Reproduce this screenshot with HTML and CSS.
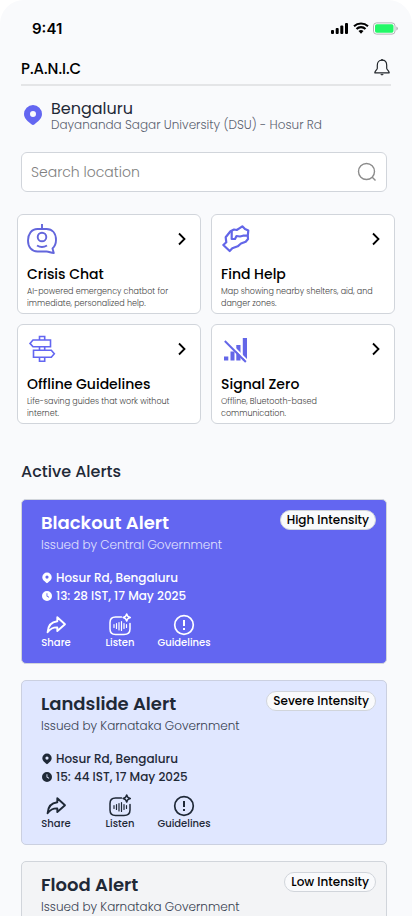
FILE: index.html
```html
<!DOCTYPE html>
<html lang="en">
<head>
<meta charset="utf-8">
<meta name="viewport" content="width=device-width, initial-scale=1">
<title>P.A.N.I.C</title>
<link rel="stylesheet" href="styles.css">
</head>
<body>
<svg class="sprite" aria-hidden="true">
  <symbol id="chevron" viewBox="0 0 8 14"><path d="M1 1.5 6.5 7 1 12.5" fill="none" stroke="currentColor" stroke-width="1.8"/></symbol>
  <symbol id="place" viewBox="0 0 10 12"><path fill="currentColor" fill-rule="evenodd" d="M5 .5A4.700 4.700 0 0 0 .3 5.2C.3 8 3 9.500 5 11.300 7 9.500 9.700 8 9.700 5.200A4.700 4.700 0 0 0 5 .5ZM5 3.500a1.600 1.600 0 1 1 0 3.200 1.600 1.600 0 0 1 0-3.200Z"/></symbol>
  <symbol id="clock" viewBox="0 0 10 10"><path fill="currentColor" fill-rule="evenodd" d="M5 0a5 5 0 1 1 0 10A5 5 0 0 1 5 0ZM4.500 2.300v3l2.300 1.500.5-.8-1.900-1.200V2.300Z"/></symbol>
  <symbol id="share" viewBox="0 0 24 24"><path d="M13.300 4.300 21 11.200 13.300 18v-3.600C9.500 14.200 6.500 15.500 3.600 19.200 4 13 7.500 8.800 13.300 8.200Z" fill="none" stroke="currentColor" stroke-width="1.900" stroke-linejoin="round"/></symbol>
  <symbol id="listen" viewBox="0 0 24 24"><g fill="none" stroke="currentColor" stroke-linecap="round" stroke-linejoin="round"><path stroke-width="1.500" d="M13.500 4H7.500Q2 4 2 9.500v6.500q0 5.500 5.500 5.500h8.500q6 0 6-5.500v-5.500"/><path stroke-width="1.200" d="M6 11.500v3M8.500 10.500v5M11 9.500v7.500M13.500 8.500v9M16 10.500v5M18.500 11.500v3"/><path stroke-width="1.500" d="M18.700.9q.4 3 3.600 3.600-3.200.6-3.600 3.600-.5-3-3.600-3.600 3.100-.6 3.600-3.600Z"/></g></symbol>
  <symbol id="guide" viewBox="0 0 24 24"><circle cx="12" cy="12" r="9.300" fill="none" stroke="currentColor" stroke-width="1.700"/><path d="M12 7v6M12 15v2" stroke="currentColor" stroke-width="2"/></symbol>
</svg>
<div class="screen">
  <div class="status">
    <span class="time">9:41</span>
    <span class="status-icons">
      <svg width="18" height="12" viewBox="0 0 18 12"><rect x="0" y="8" width="3" height="4" rx="1"/><rect x="4.700" y="6" width="3" height="6" rx="1"/><rect x="9.300" y="3.500" width="3" height="8.500" rx="1"/><rect x="14" y="1" width="3" height="11" rx="1"/></svg>
      <svg width="16" height="12" viewBox="0 0 16 12"><g fill="none" stroke="#000" stroke-width="2.100"><path d="M1 4.300a10.200 10.200 0 0 1 14 0"/><path d="M3.500 7a6.400 6.400 0 0 1 9 0"/></g><path d="M8 11.700 5.500 9.100a3.600 3.600 0 0 1 5 0Z"/></svg>
      <svg width="26" height="13" viewBox="0 0 26 13"><rect x=".5" y=".9" width="21.500" height="11.200" rx="3" fill="#fff" stroke="#b1b4b6"/><rect x="2" y="2.300" width="18.500" height="8.400" rx="1.700" fill="#23f867"/><path d="M23.300 4.500q1.600.5 1.600 2t-1.600 2Z" fill="#b1b4b6"/></svg>
    </span>
  </div>
  <header class="topbar">
    <h1>P.A.N.I.C</h1>
    <button class="bell" aria-label="Notifications"><svg width="18" height="18" viewBox="0 0 18 18" fill="none" stroke="#22262b" stroke-width="1.200" stroke-linejoin="round"><path d="M9 1.200C6 1.200 4.300 3.400 4.300 6.200v3c0 1.500-2.300 2.500-2.500 4.600h14.400c-.2-2.100-2.500-3.100-2.500-4.600v-3C13.700 3.400 12 1.200 9 1.200Z"/><path d="M8 .8h2M7.800 15q1.200 1.600 2.400 0"/></svg></button>
  </header>
  <section class="location">
    <svg width="22" height="22" viewBox="0 0 22 22"><path fill="#6366f1" fill-rule="evenodd" d="M12 0a9 9 0 0 0-9 9c0 5 4.500 7.500 7.400 10.300q1.600 1.400 3.200 0C16.500 16.500 21 14 21 9a9 9 0 0 0-9-9Zm0 6a3 3 0 1 1 0 6 3 3 0 0 1 0-6Z"/></svg>
    <div><h2>Bengaluru</h2><p>Dayananda Sagar University (DSU) - Hosur Rd</p></div>
  </section>
  <form class="search">
    <input type="search" placeholder="Search location" aria-label="Search location">
    <button type="button" aria-label="Search"><svg width="20" height="20" viewBox="0 0 20 20" fill="none" stroke="#8c8c8c" stroke-width="1.400"><circle cx="9.500" cy="9.500" r="8"/><path d="m15 15 3.500 3.500"/></svg></button>
  </form>
  <nav class="features">
    <a href="#chat">
      <span class="feature-icons"><svg width="30" height="30" viewBox="0 0 30 30" fill="none" stroke="#6366dc" stroke-width="1.900" stroke-linejoin="round"><path d="M15 0v5M10.500 5h9C25.500 5 29 9.500 29 16c0 3.800-1.300 6.500-3.500 8.500l1.300 4.500c-3 0-4.500-1.500-7.300-1.500h-9C4.500 27.500 1 23 1 16.500S4.500 5 10.500 5Z"/><circle cx="15" cy="13" r="4.300"/><path d="M10 21.500q5 3 10 0"/></svg><svg class="chevron" width="8" height="14"><use href="#chevron"/></svg></span>
      <h3>Crisis Chat</h3><p>AI-powered emergency chatbot for immediate, personalized help.</p>
    </a>
    <a href="#help">
      <span class="feature-icons"><svg width="30" height="30" viewBox="0 0 30 30" fill="none" stroke="#6366e8" stroke-width="2.200" stroke-linejoin="round"><path d="M9.500 7.200 13 5.500l2.700.5 2.600-1.700 3-2L24 5l3.300 1.500-.5 5 .2 3.500-2.300 2.700-4.700 1.800-3.300 2.800-5.400 2L8.700 27 2.300 21l3-2.700-.6-5Z"/><path d="M10.700 7v8H14l1.500-3 3.500.5 3-.8h5"/></svg><svg class="chevron" width="8" height="14"><use href="#chevron"/></svg></span>
      <h3>Find Help</h3><p>Map showing nearby shelters, aid, and danger zones.</p>
    </a>
    <a href="#guidelines">
      <span class="feature-icons"><svg width="30" height="30" viewBox="0 0 30 30" fill="none" stroke="#6366f1" stroke-width="1.600"><path d="M12.500 6V2.500h5.200V6M12.500 12.800v3M17.700 12.800v3M12.500 23.500v3.700h5.200v-3.700M23.500 6H6L3 9.400l3 3.400h17.500ZM6.500 16.200h17.800l3 3.500-3 3.500H6.500Z"/></svg><svg class="chevron" width="8" height="14"><use href="#chevron"/></svg></span>
      <h3>Offline Guidelines</h3><p>Life-saving guides that work without internet.</p>
    </a>
    <a href="#signal">
      <span class="feature-icons"><svg width="30" height="30" viewBox="0 0 30 30" fill="#6366e8"><path d="M3 22.500h4.300v4H3ZM9.500 17.500h4v9h-4ZM15.300 11h4.200v15.500h-4.200ZM21.800 4H26v22.500h-4.200Z"/><path d="m5 5.500 21 21" stroke="#fff" stroke-width="2"/><path d="m3.800 7 21 21" stroke="#6366e8" stroke-width="1.900"/></svg><svg class="chevron" width="8" height="14"><use href="#chevron"/></svg></span>
      <h3>Signal Zero</h3><p>Offline, Bluetooth-based communication.</p>
    </a>
  </nav>
  <h2 class="section-title">Active Alerts</h2>
  <main class="alerts">
    <article class="alert high">
      <div class="alert-head"><div><h3>Blackout Alert</h3><p class="issuer">Issued by Central Government</p></div><span class="badge">High Intensity</span></div>
      <p class="meta"><svg width="12" height="12"><use href="#place"/></svg>Hosur Rd, Bengaluru</p>
      <p class="meta"><svg width="12" height="10"><use href="#clock"/></svg>13: 28 IST, 17 May 2025</p>
      <div class="actions">
        <button><svg width="24" height="24"><use href="#share"/></svg>Share</button>
        <button><svg width="24" height="24"><use href="#listen"/></svg>Listen</button>
        <button><svg width="24" height="24"><use href="#guide"/></svg>Guidelines</button>
      </div>
    </article>
    <article class="alert severe">
      <div class="alert-head"><div><h3>Landslide Alert</h3><p class="issuer">Issued by Karnataka Government</p></div><span class="badge">Severe Intensity</span></div>
      <p class="meta"><svg width="12" height="12"><use href="#place"/></svg>Hosur Rd, Bengaluru</p>
      <p class="meta"><svg width="12" height="10"><use href="#clock"/></svg>15: 44 IST, 17 May 2025</p>
      <div class="actions">
        <button><svg width="24" height="24"><use href="#share"/></svg>Share</button>
        <button><svg width="24" height="24"><use href="#listen"/></svg>Listen</button>
        <button><svg width="24" height="24"><use href="#guide"/></svg>Guidelines</button>
      </div>
    </article>
    <article class="alert low">
      <div class="alert-head"><div><h3>Flood Alert</h3><p class="issuer">Issued by Karnataka Government</p></div><span class="badge">Low Intensity</span></div>
    </article>
  </main>
</div>
</body>
</html>
```
FILE: styles.css
```css
* { box-sizing: border-box; margin: 0; padding: 0; }
body { background: #fff; font-family: Poppins, Inter, sans-serif; color: #1f2937; }
button { border: 0; background: none; color: inherit; font: inherit; cursor: pointer; }
a { color: inherit; text-decoration: none; }
svg { display: block; flex: none; }
.sprite { position: absolute; width: 0; height: 0; }

.screen { height: 100vh; overflow: hidden; background: #f9fafc; border-radius: 24px 24px 0 0; }

.status { display: flex; align-items: center; justify-content: space-between; height: 56px; padding: 0 13px 0 32px; color: #000; }
.time { font-family: Inter, sans-serif; font-size: 15px; font-weight: 600; }
.status-icons { display: flex; align-items: center; gap: 4px; }

.topbar { display: flex; align-items: center; justify-content: space-between; height: 30px; margin: 0 21px; padding-bottom: 4px; border-bottom: 2px solid #e4e5e7; color: #000; }
.topbar h1 { font-size: 15px; font-weight: 500; }

.location { display: flex; align-items: center; gap: 8px; padding: 14px 21px 0; }
.location h2 { font-size: 16px; font-weight: 400; line-height: 18px; }
.location p { font-size: 12px; font-weight: 300; line-height: 14px; color: #5b6270; }

.search { display: flex; align-items: center; height: 40px; margin: 20px 25px 0 21px; padding: 0 9px; background: #fff; border: 1px solid #d1d5db; border-radius: 6px; }
.search input { flex: 1; min-width: 0; border: 0; outline: 0; background: none; font: 300 14px Poppins, Inter, sans-serif; }
.search input::placeholder { color: #808080; }

.features { display: grid; grid-template-columns: 1fr 1fr; gap: 10px; margin: 22px 17px 0; }
.features a { min-height: 100px; padding: 9px 9px 3px; background: #fff; border: 1px solid #d1d5db; border-radius: 6px; }
.feature-icons { display: flex; align-items: center; justify-content: space-between; }
.chevron { margin-right: 5px; color: #000; }
.features h3 { margin-top: 10px; font-size: 14px; font-weight: 500; line-height: 20px; color: #000; }
.features p { max-width: 158px; margin-top: 2px; font-size: 8px; font-weight: 300; line-height: 12px; color: #444; }

.section-title { margin: 36px 21px 0; font-size: 16px; font-weight: 500; line-height: 24px; }
.alerts { display: grid; gap: 16px; margin: 15px 25px 0 21px; }
.alert { min-height: 165px; padding: 10px 10px 11px 19px; border: 1px solid #d1d5db; border-radius: 5px; }
.high { background: #6366f1; color: #fff; }
.severe { background: #e0e7ff; border-color: #cbd0e0; }
.low { background: #f3f4f6; }
.alert-head { display: flex; align-items: flex-start; justify-content: space-between; margin-bottom: 15px; }
.alert h3 { margin-top: 2px; font-size: 18px; font-weight: 600; line-height: 22px; }
.issuer { margin-top: 2px; font-size: 12px; font-weight: 300; line-height: 18px; color: #374151; }
.high .issuer { color: #e0e1fd; }
.badge { padding: 0 6px; background: #f9fafc; border: 1px solid #d1d5db; border-radius: 10px; font-size: 12px; font-weight: 500; line-height: 18px; color: #000; white-space: nowrap; }
.meta { display: flex; align-items: center; gap: 3px; font-size: 12px; font-weight: 500; line-height: 18px; }
.actions { display: flex; margin: 8px 0 0 -17px; }
.actions button { display: flex; flex-direction: column; align-items: center; width: 64px; font-size: 10px; font-weight: 500; line-height: 12px; }
```
